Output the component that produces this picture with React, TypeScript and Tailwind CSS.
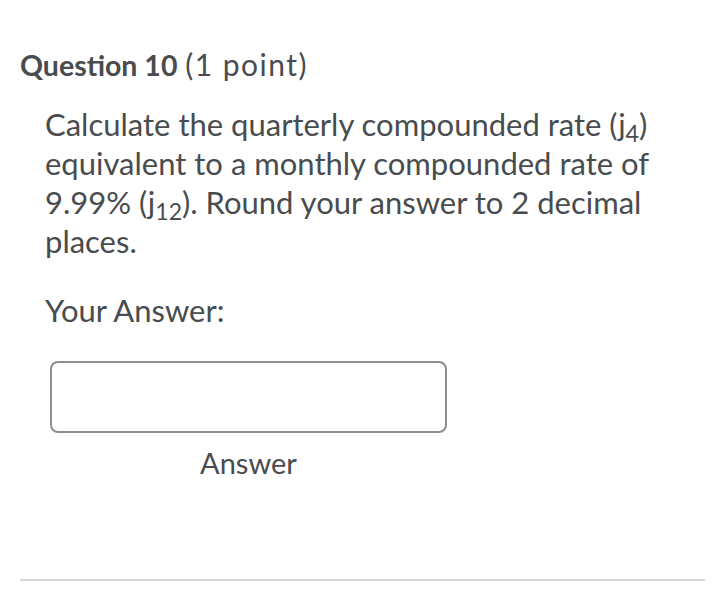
export default function App() {
  return (
    <div className="w-[720px] h-[589px] bg-white text-[#494c4e] font-['Lato','Liberation_Sans',sans-serif]">
      <div className="pt-[44px] pl-[20px] pr-[15px]">
        <h2 className="text-[30px] leading-[40px]">
          <span className="font-bold text-[28.5px]">Question 10</span>{" "}
          <span className="tracking-[1.5px]">(1 point)</span>
        </h2>
        <div className="pl-[25px] pt-[20px]">
          <p className="text-[31px] leading-[39px]">
            Calculate the quarterly compounded rate (j
            <span className="relative top-[6px] text-[23px] leading-none">4</span>) equivalent to a monthly
            compounded rate of 9.99% (j<span className="relative top-[6px] text-[23px] leading-none">12</span>).
            Round your answer to 2 decimal places.
          </p>
          <p className="mt-[30px] text-[31px] leading-[39px]">Your Answer:</p>
          <div className="mt-[31px] ml-[5px] w-[397px]">
            <input
              type="text"
              aria-label="Answer"
              className="block w-full h-[72px] rounded-[8px] border-2 border-[#8c8e90] bg-white"
            />
            <div className="mt-[13px] text-center text-[29px] leading-[34px]">Answer</div>
          </div>
        </div>
        <div className="mt-[99px] h-[2px] bg-[#d3d9db]" />
      </div>
    </div>
  );
}
